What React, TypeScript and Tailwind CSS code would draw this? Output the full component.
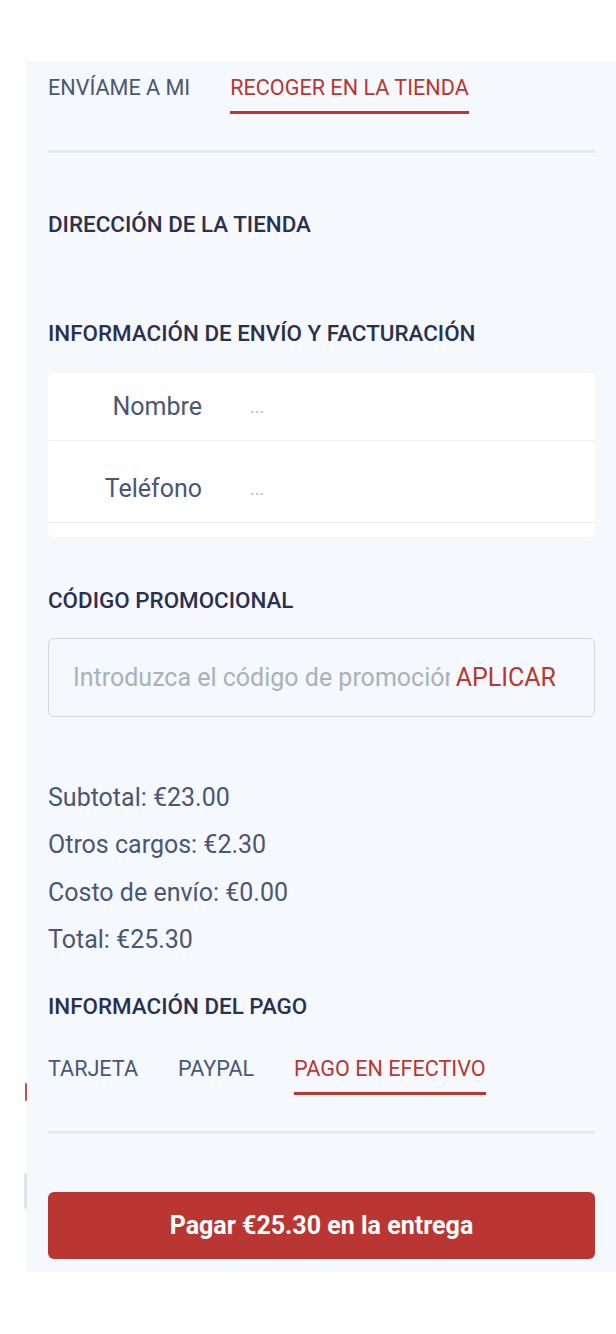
import React from "react";

const tabText = "text-[21.6px] leading-[26px]";

function Tabs({ items, active }: { items: string[]; active: number }) {
  return (
    <div>
      <div className="flex gap-10">
        {items.map((t, i) => (
          <div key={t} className="flex flex-col">
            <span className={`${tabText} ${i === active ? "text-[#b93632]" : "text-[#4b5675]"}`}>{t}</span>
            <span className={`mt-[10px] h-[3px] ${i === active ? "bg-[#b93632]" : "bg-transparent"}`} />
          </div>
        ))}
      </div>
      <div className="mt-9 h-[3px] bg-[#e5e9f5]" />
    </div>
  );
}

function Heading({ children, className = "" }: { children: React.ReactNode; className?: string }) {
  return <h2 className={`text-[22.4px] font-medium leading-[26px] text-[#2c3050] ${className}`}>{children}</h2>;
}

export default function App() {
  const totals = ["Subtotal: €23.00", "Otros cargos: €2.30", "Costo de envío: €0.00", "Total: €25.30"];
  return (
    <div className="min-h-[1334px] bg-white pt-[61px] font-['Roboto',sans-serif]">
      <div className="relative ml-[26px] bg-[#f5f8fc] pl-[22px] pr-[21px] pt-[14px] pb-[13px]">
        <span className="absolute left-[-1px] top-[1022px] h-[18px] w-[2px] rounded-full bg-[#c0504c]" />
        <span className="absolute left-[-2px] top-[1112px] h-[36px] w-[3px] rounded-full bg-[#e4e4e4]" />

        <Tabs items={["ENVÍAME A MI", "RECOGER EN LA TIENDA"]} active={1} />

        <Heading className="mt-[58px]">DIRECCIÓN DE LA TIENDA</Heading>
        <Heading className="mt-[83px]">INFORMACIÓN DE ENVÍO Y FACTURACIÓN</Heading>

        <div className="mt-[27px] rounded-md bg-white pb-[14px]">
          <div className="flex h-[68px] items-center border-b border-[#edf0f6]">
            <span className="w-[154px] text-right text-[25px] text-[#4b5675]">Nombre</span>
            <span className="ml-[48px] text-[18px] text-[#b4bac6]">...</span>
          </div>
          <div className="flex h-[82px] items-center border-b border-[#edf0f6] pt-[14px]">
            <span className="w-[154px] text-right text-[25px] text-[#4b5675]">Teléfono</span>
            <span className="ml-[48px] text-[18px] text-[#b4bac6]">...</span>
          </div>
        </div>

        <Heading className="mt-[50px]">CÓDIGO PROMOCIONAL</Heading>

        <div className="mt-[25px] flex h-[79px] items-center rounded-md border-[1.5px] border-[#d3d7de] pl-[24px] pr-[38px]">
          <span className="min-w-0 flex-1 overflow-hidden whitespace-nowrap text-[25px] text-[#a9b1be]">
            Introduzca el código de promoción
          </span>
          <span className="ml-[6px] text-[25px] text-[#b93632]">APLICAR</span>
        </div>

        <div className="mt-[57px] flex flex-col">
          {totals.map((t) => (
            <p key={t} className="text-[25px] leading-[47.3px] text-[#4b5675]">
              {t}
            </p>
          ))}
        </div>

        <Heading className="mt-[30px]">INFORMACIÓN DEL PAGO</Heading>

        <div className="mt-[37px]">
          <Tabs items={["TARJETA", "PAYPAL", "PAGO EN EFECTIVO"]} active={2} />
        </div>

        <button className="mt-[58px] flex h-[67px] w-full items-center justify-center rounded-md bg-[#b93632] text-[25px] font-bold text-white">
          Pagar €25.30 en la entrega
        </button>
      </div>
    </div>
  );
}
